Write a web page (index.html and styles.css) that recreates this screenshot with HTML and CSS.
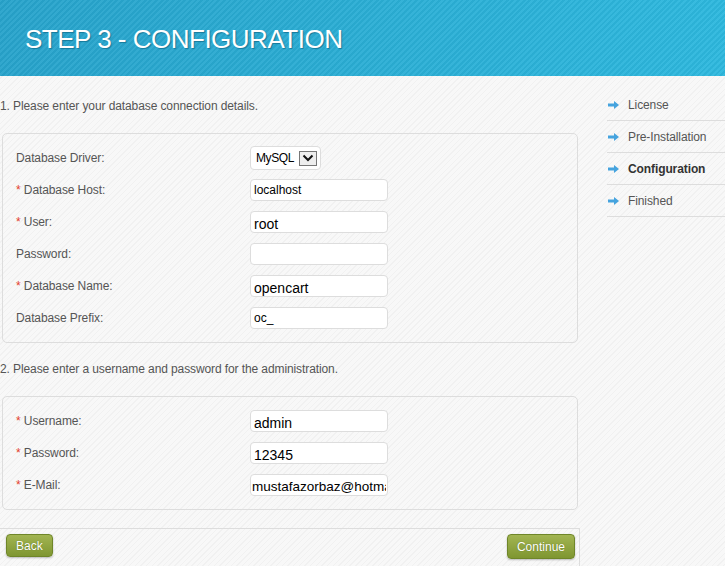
FILE: index.html
```html
<!DOCTYPE html>
<html lang="en">
  <head>
    <meta charset="UTF-8" />
    <title>Step 3 - Configuration</title>
    <link rel="stylesheet" href="styles.css">
  </head>
  <body>
    <div class="header">
      <h1>STEP 3 - CONFIGURATION</h1>
    </div>

    <div class="page">
      <div class="main">
        <p class="intro">1. Please enter your database connection details.</p>
        <div class="box">
          <div class="row">
            <label>Database Driver:</label>
            <div class="select">
              <span>MySQL</span>
              <span class="drop">
                <svg width="12" height="8" viewBox="0 0 12 8"><path d="M1.5 1.5 L6 6 L10.5 1.5" fill="none" stroke="#111" stroke-width="2"/></svg>
              </span>
            </div>
          </div>
          <div class="row">
            <label><span class="required">*</span> Database Host:</label>
            <input type="text" value="localhost" />
          </div>
          <div class="row">
            <label><span class="required">*</span> User:</label>
            <input type="text" class="big" value="root" />
          </div>
          <div class="row">
            <label>Password:</label>
            <input type="text" value="" />
          </div>
          <div class="row">
            <label><span class="required">*</span> Database Name:</label>
            <input type="text" class="big" value="opencart" />
          </div>
          <div class="row">
            <label>Database Prefix:</label>
            <input type="text" value="oc_" />
          </div>
        </div>

        <p class="intro second">2. Please enter a username and password for the administration.</p>
        <div class="box">
          <div class="row">
            <label><span class="required">*</span> Username:</label>
            <input type="text" class="big" value="admin" />
          </div>
          <div class="row">
            <label><span class="required">*</span> Password:</label>
            <input type="text" class="big" value="12345" />
          </div>
          <div class="row">
            <label><span class="required">*</span> E-Mail:</label>
            <input type="text" class="mail" value="mustafazorbaz@hotmail.com" />
          </div>
        </div>

        <div class="buttons">
          <button class="back">Back</button>
          <button class="continue">Continue</button>
        </div>
      </div>

      <ul class="steps">
        <li><svg class="arrow" width="11" height="8" viewBox="0 0 11 8"><path d="M0 2.5 H6 V0 L11 4 L6 8 V5.5 H0 Z" fill="#45a3de"/></svg>License</li>
        <li><svg class="arrow" width="11" height="8" viewBox="0 0 11 8"><path d="M0 2.5 H6 V0 L11 4 L6 8 V5.5 H0 Z" fill="#45a3de"/></svg>Pre-Installation</li>
        <li class="current"><svg class="arrow" width="11" height="8" viewBox="0 0 11 8"><path d="M0 2.5 H6 V0 L11 4 L6 8 V5.5 H0 Z" fill="#45a3de"/></svg>Configuration</li>
        <li><svg class="arrow" width="11" height="8" viewBox="0 0 11 8"><path d="M0 2.5 H6 V0 L11 4 L6 8 V5.5 H0 Z" fill="#45a3de"/></svg>Finished</li>
      </ul>
    </div>
  </body>
</html>
```

FILE: styles.css
```css
body {
  margin: 0;
  font-family: "Liberation Sans", Arial, sans-serif;
  font-size: 12px;
  letter-spacing: -0.1px;
  color: #555;
  background-color: #f6f6f6;
  background-image: repeating-linear-gradient(
    135deg,
    #f8f8f8 0px,
    #f8f8f8 3px,
    #f1f1f1 3px,
    #f1f1f1 4px
  );
}

.header {
  height: 76px;
  padding-left: 25px;
  display: flex;
  align-items: center;
  background-color: #2aaed5;
  background-image: repeating-linear-gradient(
      135deg,
      rgba(255, 255, 255, 0.05) 0px,
      rgba(255, 255, 255, 0.05) 2px,
      rgba(0, 0, 0, 0.03) 2px,
      rgba(0, 0, 0, 0.03) 4px
    ),
    linear-gradient(to right, #27a3cb, #2db8de);
}

.header h1 {
  margin: 0;
  padding-top: 2px;
  font-weight: normal;
  font-size: 26px;
  letter-spacing: -0.5px;
  color: #fff;
  text-shadow: 1px 1px 1px #17799a;
}

.page {
  display: flex;
}

.main {
  width: 580px;
}

.intro {
  margin: 22px 0 19px;
  line-height: 16px;
}

.intro.second {
  margin-top: 18px;
}

.box {
  margin: 0 2px;
  padding: 8px 0 8px 13px;
  border: 1px solid #ddd;
  border-radius: 5px;
}

.row {
  height: 32px;
  display: flex;
  align-items: center;
}

.row label {
  width: 234px;
}

.required {
  color: #e3402c;
}

.row input {
  box-sizing: border-box;
  width: 138px;
  height: 22px;
  padding: 0 3px;
  border: 1px solid #ddd;
  border-radius: 4px;
  background: #fff;
  font-family: "Liberation Sans", Arial, sans-serif;
  font-size: 12px;
  color: #000;
  outline: none;
}

.row input.big {
  font-size: 14px;
  padding-top: 4px;
}

.row input.mail {
  font-size: 13.5px;
  padding: 2px 1px 0;
}

.select {
  box-sizing: border-box;
  width: 71px;
  height: 24px;
  padding: 0 3px 0 5px;
  display: flex;
  align-items: center;
  justify-content: space-between;
  border: 1px solid #ddd;
  border-radius: 4px;
  background: #fff;
  font-size: 12px;
  letter-spacing: -0.4px;
  color: #000;
}

.drop {
  box-sizing: border-box;
  width: 18px;
  height: 15px;
  display: flex;
  align-items: center;
  justify-content: center;
  border: 1px solid #777;
  background: #eee;
}

.buttons {
  margin-top: 18px;
  height: 36px;
  padding: 5px 4px 0 6px;
  display: flex;
  justify-content: space-between;
  align-items: flex-start;
  border: 1px solid #ddd;
  border-left: none;
}

.buttons button {
  height: 23px;
  padding: 0 9px;
  border: 1px solid #6f8629;
  border-radius: 4px;
  background: linear-gradient(to bottom, #a2b552, #7f9631);
  box-shadow: 0 1px 2px rgba(0, 0, 0, 0.25);
  font-family: "Liberation Sans", Arial, sans-serif;
  font-size: 12px;
  color: #fff;
  text-shadow: 0 0 1px #5a6c1c;
  cursor: pointer;
}

.buttons .continue {
  height: 25px;
  padding: 0 9px;
}

.steps {
  list-style: none;
  margin: 13px 0 0 27px;
  padding: 0;
  flex: 1;
}

.steps li {
  height: 31px;
  display: flex;
  align-items: center;
  border-bottom: 1px solid #ddd;
}

.steps .arrow {
  margin: 0 9px 0 1px;
}

.steps .current {
  font-weight: bold;
  color: #333;
}
```
